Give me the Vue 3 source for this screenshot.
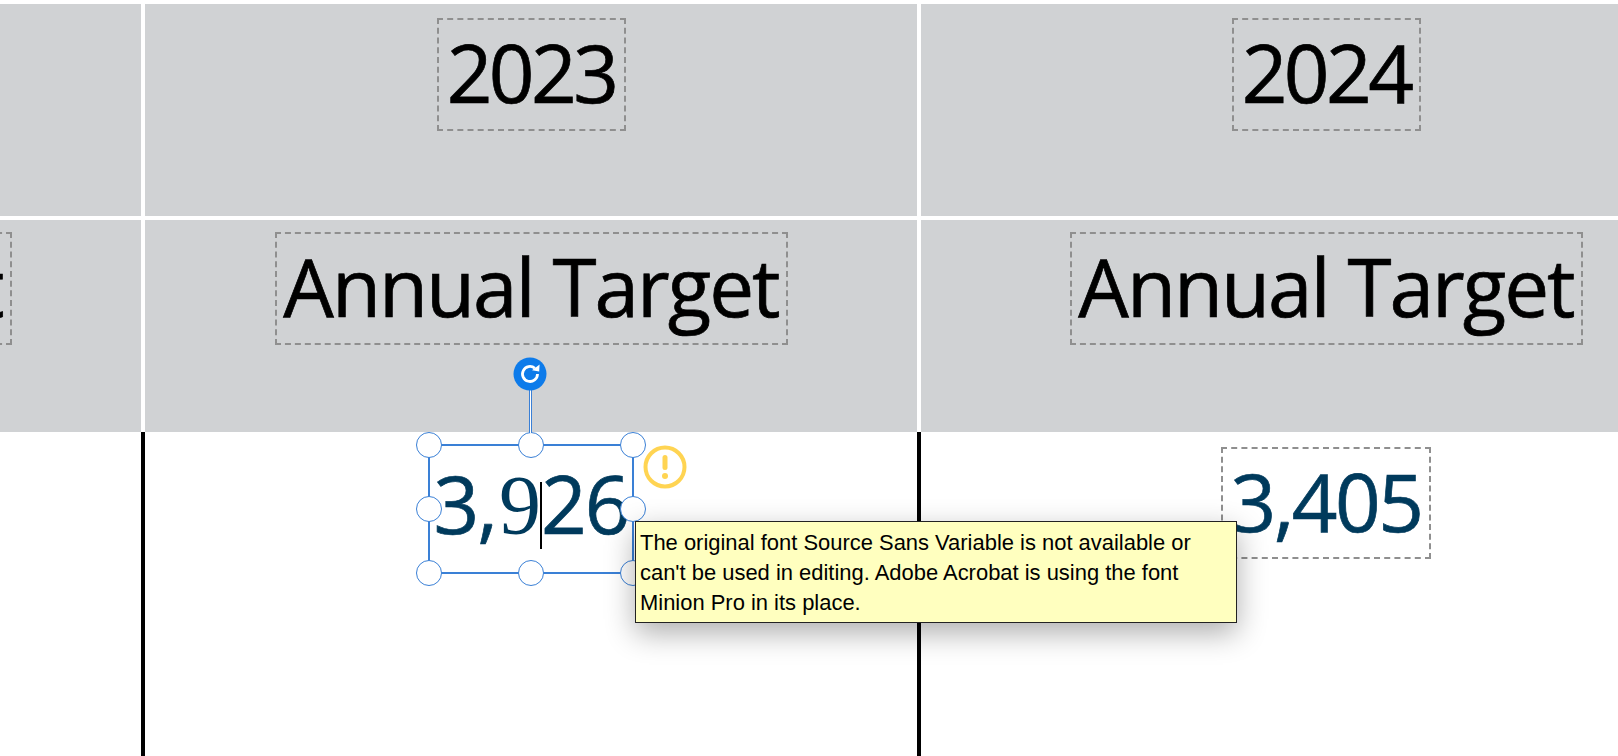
<script setup>
const years = [
  { year: '2023', label: 'Annual Target' },
  { year: '2024', label: 'Annual Target' },
]
const handles = ['tl', 'tc', 'tr', 'ml', 'mr', 'bl', 'bc', 'br']
</script>

<template>
  <div class="page">
    <div class="table">
      <div class="cell head"></div>
      <div v-for="y in years" :key="y.year" class="cell head">
        <span class="box year"><span class="lift">{{ y.year }}</span></span>
      </div>

      <div class="cell head">
        <span class="box label"><span class="lift">Annual Target</span></span>
      </div>
      <div v-for="y in years" :key="y.year + '-label'" class="cell head">
        <span class="box label"><span class="lift">{{ y.label }}</span></span>
      </div>

      <div class="cell body"></div>
      <div class="cell body">
        <div class="selected">
          <span class="value">3,<span class="minion">9</span><i class="caret"></i>26</span>
          <span v-for="h in handles" :key="h" class="handle" :class="h"></span>
          <span class="stem"></span>
          <svg class="rotate" width="34" height="34" viewBox="0 0 34 34">
            <circle cx="17" cy="17" r="16.5" fill="#0d7bea" />
            <path d="M24.5 17a7.5 7.5 0 1 1-2.6-5.7" fill="none" stroke="#fff" stroke-width="2.8" />
            <path d="M19 13.2l7.2 1.2.4-7z" fill="#fff" />
          </svg>
          <svg class="warn" width="44" height="44" viewBox="0 0 44 44">
            <circle cx="22" cy="22" r="19.5" fill="#fff" stroke="#ffd452" stroke-width="4" />
            <rect x="19.5" y="10" width="5" height="15" rx="2.5" fill="#ffd452" />
            <circle cx="22" cy="31" r="3" fill="#ffd452" />
          </svg>
        </div>
      </div>
      <div class="cell body">
        <span class="box amount"><span class="lift">3,405</span></span>
      </div>
    </div>

    <div class="tooltip">
      The original font Source Sans Variable is not available or
      can't be used in editing. Adobe Acrobat is using the font
      Minion Pro in its place.
    </div>
  </div>
</template>

<style scoped>
.page {
  position: relative;
  width: 1618px;
  height: 756px;
  overflow: hidden;
  background: #fff;
}

.table {
  display: grid;
  grid-template-columns: 772px 772px 810px;
  grid-template-rows: 212px 212px 324px;
  column-gap: 4px;
  row-gap: 4px;
  margin-left: -631px;
  padding-top: 4px;
  font-family: "Open Sans", sans-serif;
}

.cell {
  display: flex;
  justify-content: center;
  align-items: flex-start;
}

.head {
  background: #d0d2d4;
  padding-top: 14px;
  color: #000;
}

.table > .head:nth-child(n + 4) {
  padding-top: 12px;
}

.body {
  position: relative;
  padding-top: 15px;
  margin-top: -4px;
  height: 328px;
}

.body:nth-child(-n + 8):not(:last-child)::after {
  content: '';
  position: absolute;
  top: 0;
  bottom: 0;
  right: -4px;
  width: 4px;
  background: #000;
}

.box {
  box-sizing: border-box;
  display: flex;
  align-items: center;
  justify-content: center;
  border: 2px dashed #8f8f8f;
  white-space: nowrap;
}

.lift {
  position: relative;
  top: -3px;
  -webkit-text-stroke: 0.7px currentColor;
}

.year {
  width: 189px;
  height: 113px;
  font-size: 80px;
  letter-spacing: -3.6px;
}

.label {
  width: 513px;
  height: 113px;
  font-size: 80px;
  letter-spacing: -2px;
}

.amount {
  width: 210px;
  height: 112px;
  font-size: 80px;
  letter-spacing: -2.5px;
  color: #003a5c;
}

.selected {
  position: relative;
  box-sizing: border-box;
  display: flex;
  align-items: center;
  justify-content: center;
  width: 206px;
  height: 130px;
  margin-top: -3px;
  border: 2px solid #3a80d6;
}

.value {
  position: relative;
  font-size: 80px;
  letter-spacing: -2px;
  color: #003a5c;
  white-space: nowrap;
  top: -7px;
  -webkit-text-stroke: 0.7px currentColor;
}

.minion {
  font-family: "Liberation Serif", serif;
  font-size: 84px;
  margin-left: 3px;
  -webkit-text-stroke: 0;
}

.caret {
  display: inline-block;
  width: 2px;
  height: 67px;
  margin: 0 -1px 0 1px;
  background: #000;
  vertical-align: -15px;
}

.handle {
  position: absolute;
  box-sizing: border-box;
  width: 26px;
  height: 26px;
  border-radius: 50%;
  background: #fff;
  border: 1px solid #3a80d6;
}

.tl, .tc, .tr { top: -14px; }
.ml, .mr { top: calc(50% - 13px); }
.bl, .bc, .br { bottom: -14px; }
.tl, .ml, .bl { left: -14px; }
.tc, .bc { left: calc(50% - 13px); }
.tr, .mr, .br { right: -14px; }

.stem {
  position: absolute;
  left: calc(50% - 2px);
  top: -57px;
  width: 1px;
  height: 44px;
  border: 1px solid #3a80d6;
  border-width: 0 1px;
  background: #fff;
}

.rotate {
  position: absolute;
  left: calc(50% - 18px);
  top: -89px;
}

.warn {
  position: absolute;
  right: -55px;
  top: -1px;
}

.tooltip {
  position: absolute;
  left: 635px;
  top: 521px;
  box-sizing: border-box;
  width: 602px;
  height: 102px;
  padding: 6px 4px;
  background: #ffffbf;
  border: 1px solid #222;
  box-shadow: 0 10px 28px rgba(0, 0, 0, 0.32);
  font-family: "Liberation Sans", sans-serif;
  font-size: 21.95px;
  line-height: 30px;
  color: #000;
}
</style>
